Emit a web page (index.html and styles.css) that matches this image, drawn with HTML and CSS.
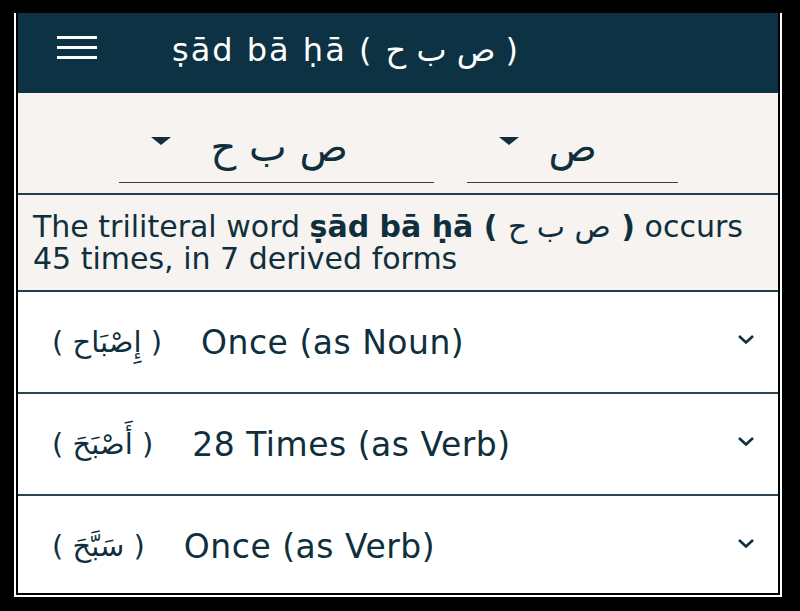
FILE: index.html
```html
<!DOCTYPE html>
<html lang="en">
<head>
  <meta charset="UTF-8" />
  <title>ṣād bā ḥā</title>
  <link rel="stylesheet" href="styles.css">
</head>
<body>
  <div class="frame">
    <div class="app">
      <header class="toolbar">
        <div class="menu"><span></span><span></span><span></span></div>
        <h1 class="title">ṣād bā ḥā ( <bdi>ص ب ح</bdi> )</h1>
      </header>

      <section class="pickers">
        <div class="picker wide"><span class="caret"></span><span class="ar">ص ب ح</span></div>
        <div class="picker narrow"><span class="caret"></span><span class="ar">ص</span></div>
      </section>

      <section class="summary">
        <p>The triliteral word <b>ṣād bā ḥā ( <bdi class="root">ص ب ح</bdi> )</b> occurs<br>45 times, in 7 derived forms</p>
      </section>

      <ul class="forms">
        <li class="form">
          <span class="term" dir="rtl">( إِصْبَاح )</span>
          <span class="count">Once (as Noun)</span>
          <svg class="chevron" width="18" height="11" viewBox="0 0 18 11"><polyline points="2,2 9,8.5 16,2" /></svg>
        </li>
        <li class="form">
          <span class="term" dir="rtl">( أَصْبَحَ )</span>
          <span class="count">28 Times (as Verb)</span>
          <svg class="chevron" width="18" height="11" viewBox="0 0 18 11"><polyline points="2,2 9,8.5 16,2" /></svg>
        </li>
        <li class="form">
          <span class="term" dir="rtl">( سَبَّحَ )</span>
          <span class="count">Once (as Verb)</span>
          <svg class="chevron" width="18" height="11" viewBox="0 0 18 11"><polyline points="2,2 9,8.5 16,2" /></svg>
        </li>
      </ul>
    </div>
  </div>
</body>
</html>
```

FILE: styles.css
```css
/* page frame */
body {
  margin: 0;
  background-color: #000;
}

.frame {
  margin: 13px 18px 0 14px;
  border: 2px solid #fff;
  border-top: none;
  padding: 0 2px 2px 2px;
}

.app {
  height: 580px;
  overflow: hidden;
  background-color: #fff;
  color: #0f2f3c;
  font-family: "DejaVu Sans", sans-serif;
}

/* top bar */
.toolbar {
  height: 80px;
  box-sizing: border-box;
  display: flex;
  align-items: center;
  padding: 0 0 12px 39px;
  background-color: #0c3243;
  color: #fff;
}

.menu {
  width: 40px;
  display: flex;
  flex-direction: column;
  gap: 7px;
}

.menu span {
  height: 3px;
  background-color: #fff;
}

.title {
  margin: 6px 0 0 75px;
  font-size: 32px;
  font-weight: 400;
  letter-spacing: 2px;
}

/* root pickers */
.pickers {
  height: 102px;
  box-sizing: border-box;
  display: flex;
  justify-content: center;
  align-items: flex-end;
  gap: 33px;
  padding-bottom: 10px;
  background-color: #f6f3f1;
  border-bottom: 2px solid #233f4b;
}

.picker {
  height: 72px;
  box-sizing: border-box;
  display: flex;
  align-items: center;
  gap: 40px;
  padding-left: 32px;
  border-bottom: 1.5px solid #2a4550;
}

.picker.wide {
  width: 315px;
}

.picker.narrow {
  width: 211px;
  gap: 30px;
}

.caret {
  width: 0;
  height: 0;
  border-left: 10px solid transparent;
  border-right: 10px solid transparent;
  border-top: 8px solid #0f2f3c;
  margin-bottom: 12px;
}

.picker .ar {
  font-size: 40px;
  line-height: 1;
}

/* summary text */
.summary {
  height: 97px;
  box-sizing: border-box;
  padding: 16px 15px 0 15px;
  background-color: #f6f3f1;
  border-bottom: 2px solid #233f4b;
}

.summary p {
  margin: 0;
  font-size: 30px;
  line-height: 32px;
}

.summary .root {
  font-weight: 400;
}

/* derived forms list */
.forms {
  list-style: none;
  margin: 0;
  padding: 0;
}

.form {
  height: 102px;
  box-sizing: border-box;
  display: flex;
  align-items: center;
  padding: 0 23px 0 34px;
  border-bottom: 2px solid #2a4550;
}

.term {
  font-size: 29px;
  margin-right: 39px;
}

.count {
  font-size: 33px;
  letter-spacing: 0.5px;
}

.chevron {
  margin-left: auto;
  margin-bottom: 6px;
}

.chevron polyline {
  fill: none;
  stroke: #0f2f3c;
  stroke-width: 2.6;
}
```
